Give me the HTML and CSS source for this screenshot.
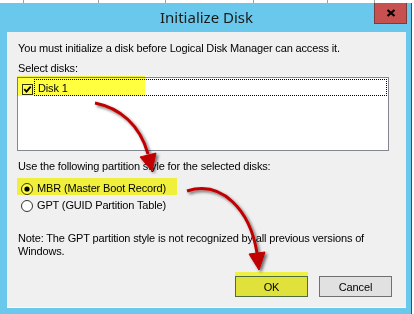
FILE: index.html
```html
<!DOCTYPE html>
<html lang="en">
<head>
    <meta charset="UTF-8">
    <meta name="viewport" content="width=device-width, initial-scale=1.0">
    <title>Initialize Disk</title>
    <link rel="stylesheet" href="styles.css">
</head>
<body>
    <div class="backdrop">
        <span class="col" style="width: 24px"></span>
        <span class="col" style="width: 75px"></span>
        <span class="col" style="width: 67px"></span>
        <span class="col" style="width: 88px"></span>
        <span class="col" style="width: 74px"></span>
        <span class="col" style="width: 47px"></span>
    </div>

    <div class="window">
        <div class="titlebar">
            <span></span>
            <h1 class="title">Initialize Disk</h1>
            <button class="close" aria-label="Close">
                <svg width="10" height="8" viewBox="0 0 10 8">
                    <path d="M1.5 1 L8.5 7 M8.5 1 L1.5 7" stroke="#000" stroke-width="2.2" fill="none"/>
                </svg>
            </button>
        </div>

        <div class="client">
            <p class="line">You must initialize a disk before Logical Disk Manager can access it.</p>
            <p class="line label">Select disks:</p>

            <div class="listbox">
                <div class="item">
                    <svg class="check" width="11" height="11" viewBox="0 0 11 11">
                        <rect x="0.5" y="0.5" width="10" height="10" fill="#fff" stroke="#333"/>
                        <path d="M2.3 5.2 L4.5 7.6 L8.7 2.6" stroke="#000" stroke-width="1.8" fill="none"/>
                    </svg>
                    <span class="item-text">Disk 1</span>
                </div>
                <span class="mark mark-disk"></span>
            </div>

            <p class="line label-style">Use the following partition style for the selected disks:</p>

            <div class="radios">
                <label class="radio">
                    <svg width="12" height="12" viewBox="0 0 12 12">
                        <circle cx="6" cy="6" r="5.5" fill="#fff" stroke="#333"/>
                        <circle cx="6" cy="6" r="2.6" fill="#000"/>
                    </svg>
                    <span>MBR (Master Boot Record)</span>
                    <span class="mark mark-mbr"></span>
                </label>
                <label class="radio">
                    <svg width="12" height="12" viewBox="0 0 12 12">
                        <circle cx="6" cy="6" r="5.5" fill="#fff" stroke="#333"/>
                    </svg>
                    <span>GPT (GUID Partition Table)</span>
                </label>
            </div>

            <p class="line note">Note: The GPT partition style is not recognized by all previous versions of<br>Windows.</p>

            <div class="buttons">
                <button class="btn btn-ok">OK</button>
                <button class="btn">Cancel</button>
            </div>
        </div>
    </div>

    <!-- annotation arrows drawn over the dialog -->
    <svg class="arrows" width="414" height="314" viewBox="0 0 414 314">
        <defs>
            <filter id="shadow" x="-20%" y="-20%" width="140%" height="140%">
                <feDropShadow dx="2" dy="2" stdDeviation="1.4" flood-color="#000" flood-opacity="0.55"/>
            </filter>
        </defs>
        <g filter="url(#shadow)" fill="#c00000" stroke="#c00000">
            <path d="M95 103 C 120 108, 140 125, 148 154" fill="none" stroke-width="3"/>
            <polygon points="140,157 156,153 152,171" stroke-width="1"/>
            <path d="M187 191 C 222 180, 250 210, 257 253" fill="none" stroke-width="3"/>
            <polygon points="249,254 265,252 259,270" stroke-width="1"/>
        </g>
    </svg>
</body>
</html>
```

FILE: styles.css
```css
body {
    margin: 0;
    width: 414px;
    height: 314px;
    overflow: hidden;
    background: #ffffff;
    font-family: 'Liberation Sans', Arial, sans-serif;
    font-size: 11px;
    letter-spacing: -0.15px;
    color: #000000;
    position: relative;
}

.backdrop {
    height: 3px;
    display: flex;
}

.backdrop .col {
    border-right: 1px solid #a0a0a0;
    box-sizing: border-box;
}

.window {
    width: 412px;
    height: 311px;
    box-sizing: border-box;
    padding: 0 5px 0 7px;
    background: #69c8eb;
    border-right: 1px solid #4a4a4a;
}

.titlebar {
    height: 29px;
    display: grid;
    grid-template-columns: 1fr auto 1fr;
    align-items: start;
}

.title {
    margin: 0;
    font-family: 'Noto Sans', sans-serif;
    font-size: 15px;
    font-weight: normal;
    letter-spacing: 0;
    line-height: 29px;
    color: #1a1a1a;
}

.close {
    justify-self: end;
    margin-right: -1px;
    width: 33px;
    height: 21px;
    padding: 0;
    border: 1px solid #7a3b3b;
    border-top: none;
    background: #c75050;
    display: flex;
    align-items: center;
    justify-content: center;
}

.client {
    height: 276px;
    box-sizing: border-box;
    padding: 10px 14px 10px 11px;
    background: #f0f0f0;
    border-bottom: 1px solid #fafafa;
}

.line {
    margin: 0;
    line-height: 13px;
}

.label { margin-top: 7px; }

.listbox {
    position: relative;
    margin: 2px 0 0 -1px;
    width: 372px;
    height: 74px;
    box-sizing: border-box;
    border: 1px solid #828790;
    background: #ffffff;
}

.item {
    display: flex;
    align-items: flex-end;
    margin-top: 1px;
    height: 17px;
}

.check {
    margin: 0 0 1px 4px;
    flex-shrink: 0;
}

.item-text {
    flex: 1;
    height: 17px;
    box-sizing: border-box;
    margin: 0 1px 0 1px;
    padding: 2px 0 0 3px;
    line-height: 13px;
    border: 1px dotted #000000;
}

.mark {
    position: absolute;
    background: #ffff40;
    mix-blend-mode: multiply;
}

.mark-disk {
    left: -1px;
    top: -2px;
    width: 128px;
    height: 20px;
}

.label-style { margin-top: 9px; }

.radios {
    margin-top: 7px;
    display: flex;
    flex-direction: column;
}

.radio {
    position: relative;
    height: 17px;
    display: flex;
    align-items: center;
    gap: 4px;
    padding-left: 3px;
    line-height: 13px;
}

.mark-mbr {
    left: -1px;
    top: -2px;
    width: 160px;
    height: 17px;
}

.note { margin-top: 18px; }

.buttons {
    margin-top: 18px;
    display: flex;
    justify-content: flex-end;
    gap: 11px;
}

.btn {
    width: 73px;
    height: 21px;
    padding: 0;
    font-family: inherit;
    font-size: 11px;
    letter-spacing: inherit;
    color: #000000;
    background: #e1e1e1;
    border: 1px solid #707070;
}

.btn-ok {
    background: #e1e13c;
    border-color: #4e6d3c;
    box-shadow: 0 -4px 0 #efef45;
}

.arrows {
    position: absolute;
    left: 0;
    top: 0;
    pointer-events: none;
}
```
